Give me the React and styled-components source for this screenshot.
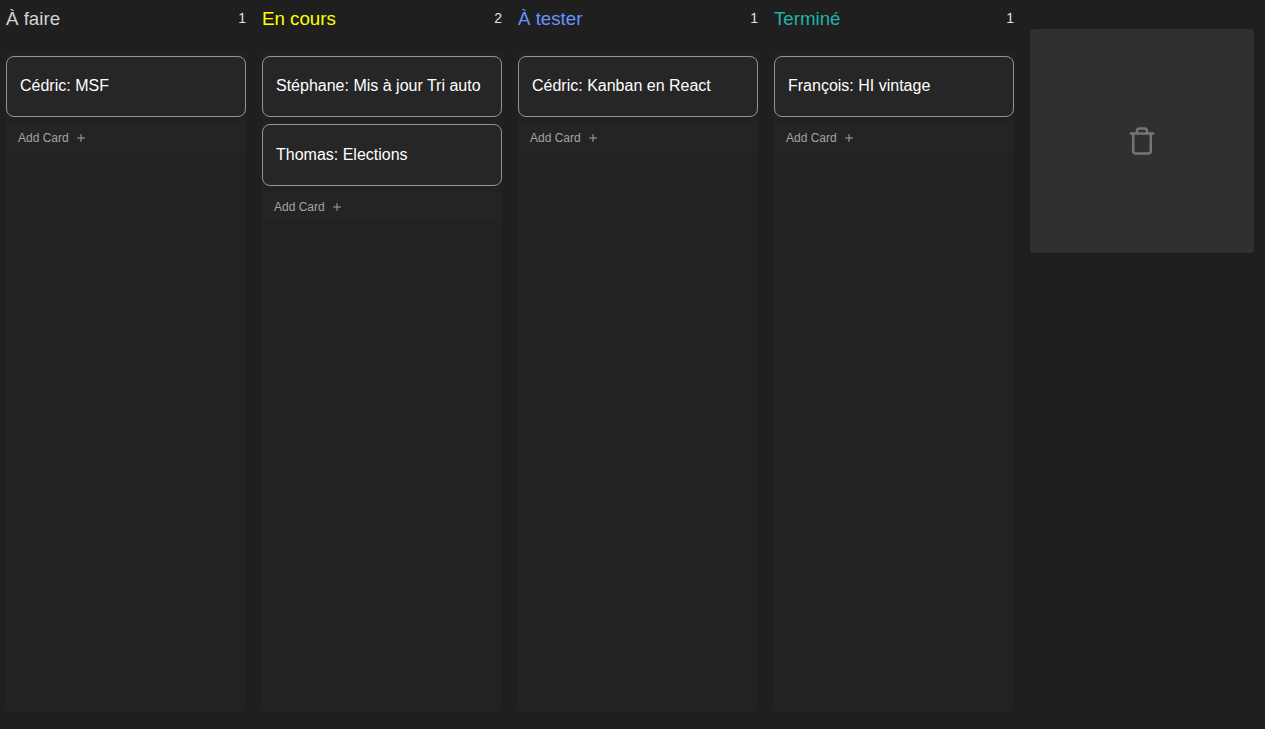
import React from "react";
import styled, { createGlobalStyle } from "styled-components";
import { FiPlus, FiTrash } from "react-icons/fi";

const GlobalStyle = createGlobalStyle`
  *, *::before, *::after { box-sizing: border-box; }
  body {
    margin: 0;
    background: #1f1f1f;
    color: #fff;
    font-family: "Liberation Sans", Arial, sans-serif;
    overflow: hidden;
  }
`;

const Board = styled.main`
  display: flex;
  gap: 16px;
  height: 729px;
  padding: 0 6px;
`;

const ColumnBox = styled.section`
  display: flex;
  flex-direction: column;
  flex: 0 0 240px;
`;

const ColumnHeader = styled.header`
  display: flex;
  align-items: center;
  justify-content: space-between;
  height: 36px;
  margin-bottom: 15px;
`;

const Title = styled.h3`
  margin: 0;
  padding-top: 2px;
  font-size: 18.72px;
  font-weight: 400;
  line-height: 22px;
  color: ${(p) => p.$color};
`;

const Count = styled.span`
  font-size: 14px;
  line-height: 18px;
  color: #e0e0e0;
`;

const CardList = styled.div`
  display: flex;
  flex-direction: column;
  gap: 7px;
  height: 660px;
  padding-top: 5px;
  background: #222222;
`;

const CardBox = styled.article`
  height: 61.4px;
  padding: 20.2px 13px 0;
  border: 1px solid #959595;
  border-radius: 8px;
  background: #262626;
  font-size: 16px;
  line-height: 18px;
`;

const AddButton = styled.button`
  display: flex;
  align-items: center;
  gap: 6px;
  height: 28px;
  padding: 0 12px;
  border: 0;
  background: #242424;
  color: #a3a3a3;
  font: 12px/18px "Liberation Sans", Arial, sans-serif;
`;

const TrashZone = styled.aside`
  display: grid;
  place-items: center;
  width: 224px;
  height: 224px;
  margin-top: 29px;
  border-radius: 4px;
  background: #303030;
  color: #757575;
  font-size: 30px;
`;

const columns = [
  { title: "À faire", color: "#d4d4d4", cards: ["Cédric: MSF"] },
  {
    title: "En cours",
    color: "#ffff00",
    cards: ["Stéphane: Mis à jour Tri auto", "Thomas: Elections"],
  },
  { title: "À tester", color: "#6495ff", cards: ["Cédric: Kanban en React"] },
  { title: "Terminé", color: "#20b2aa", cards: ["François: HI vintage"] },
];

function Column({ title, color, cards }) {
  return (
    <ColumnBox>
      <ColumnHeader>
        <Title $color={color}>{title}</Title>
        <Count>{cards.length}</Count>
      </ColumnHeader>
      <CardList>
        {cards.map((card) => (
          <CardBox key={card}>{card}</CardBox>
        ))}
        <AddButton type="button">
          <span>Add Card</span>
          <FiPlus />
        </AddButton>
      </CardList>
    </ColumnBox>
  );
}

export default function App() {
  return (
    <>
      <GlobalStyle />
      <Board>
        {columns.map((column) => (
          <Column key={column.title} {...column} />
        ))}
        <TrashZone aria-label="Delete">
          <FiTrash />
        </TrashZone>
      </Board>
    </>
  );
}
